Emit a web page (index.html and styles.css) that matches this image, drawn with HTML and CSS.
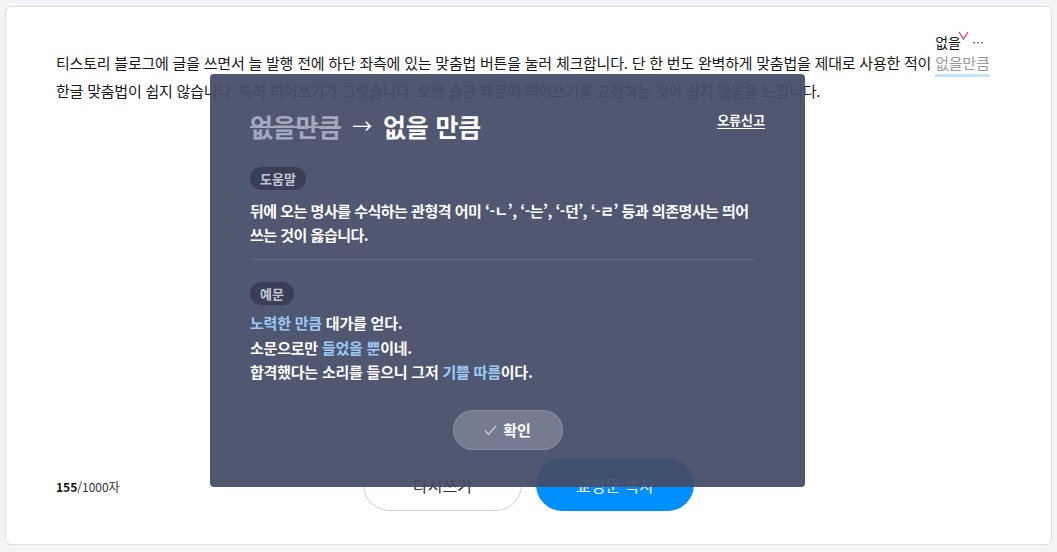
FILE: index.html
```html
<!DOCTYPE html>
<html lang="ko">
<head>
<meta charset="utf-8">
<title>맞춤법 검사</title>
<link rel="stylesheet" href="styles.css">
</head>
<body>
<div class="card">
  <p class="text">티스토리 블로그에 글을 쓰면서 늘 발행 전에 하단 좌측에 있는 맞춤법 버튼을 눌러 체크합니다. 단 한 번도 완벽하게 맞춤법을 제대로 사용한 적이 <span class="err">없을만큼<span class="tip">없을<svg class="tip-mark" width="11" height="9" viewBox="0 0 11 9"><path d="M1 1 L5.5 8 L10 1" fill="none" stroke="#f0304a" stroke-width="1.2"/></svg><span class="tip-more">…</span></span></span> 한글 맞춤법이 쉽지 않습니다. 특히 띄어쓰기가 그렇습니다. 오랜 습관 때문에 띄어쓰기를 교정하는 것이 쉽지 않음을 느낍니다.</p>

  <div class="footer">
    <div class="count"><b>155</b>/1000자</div>
    <div class="actions">
      <button class="btn btn-line">다시쓰기</button>
      <button class="btn btn-blue">교정문 복사</button>
    </div>
    <div></div>
  </div>

  <div class="popup">
    <a class="report">오류신고</a>
    <h2 class="title"><s class="before">없을만큼</s><span class="arrow">→</span><span class="after">없을 만큼</span></h2>
    <div class="section">
      <span class="badge">도움말</span>
      <p class="help">뒤에 오는 명사를 수식하는 관형격 어미 ‘-ㄴ’, ‘-는’, ‘-던’, ‘-ㄹ’ 등과 의존명사는 띄어 쓰는 것이 옳습니다.</p>
    </div>
    <div class="divider"></div>
    <div class="section">
      <span class="badge badge-ex">예문</span>
      <p class="examples"><span class="hl">노력한 만큼</span> 대가를 얻다.<br>소문으로만 <span class="hl">들었을 뿐</span>이네.<br>합격했다는 소리를 들으니 그저 <span class="hl">기쁠 따름</span>이다.</p>
    </div>
    <div class="confirm-row">
      <button class="confirm"><svg class="check" width="13" height="11" viewBox="0 0 13 11"><path d="M1 5.5 L4.5 9.5 L12 1" fill="none" stroke="#e6e8ef" stroke-width="1.1"/></svg>확인</button>
    </div>
  </div>
</div>
</body>
</html>
```

FILE: styles.css
```css
* { box-sizing: border-box; }
html, body { margin: 0; padding: 0; }
body {
  background: #f3f4f6;
  font-family: "Noto Sans CJK KR", "Noto Sans", sans-serif;
  color: #1a1a1a;
  padding: 6px 5px 0 5px;
}
.card {
  position: relative;
  height: 539px;
  background: #fff;
  border: 1px solid #dcdcde;
  border-radius: 6px;
  padding: 42px 50px 33px 50px;
  display: flex;
  flex-direction: column;
}
.text {
  margin: 0;
  font-size: 15px;
  line-height: 28px;
  letter-spacing: -0.22px;
  color: #1a1a1a;
}
.err {
  position: relative;
  white-space: nowrap;
  color: #9a9a9a;
  border-bottom: 3px solid #c3e1f7;
  padding-bottom: 1px;
}
.tip {
  position: absolute;
  left: 0;
  top: -20px;
  font-size: 14px;
  line-height: 20px;
  letter-spacing: 0;
  color: #111;
  white-space: nowrap;
}
.tip-mark {
  position: absolute;
  left: 23px;
  top: -1px;
}
.tip-more {
  margin-left: 11px;
  font-size: 12px;
  color: #333;
}
.footer {
  margin-top: auto;
  display: grid;
  grid-template-columns: 1fr auto 1fr;
  align-items: center;
}
.count {
  font-size: 12px;
  color: #333;
  padding-top: 4px;
}
.count b { font-weight: 700; color: #111; }
.actions {
  display: flex;
  gap: 14px;
}
.btn {
  height: 53px;
  border-radius: 27px;
  font-family: inherit;
  font-size: 16px;
  padding: 0;
  cursor: pointer;
}
.btn-line {
  width: 159px;
  background: #fff;
  border: 1px solid #cfcfcf;
  color: #333;
}
.btn-blue {
  width: 158px;
  background: #008ffe;
  border: none;
  color: #fff;
}
.popup {
  position: absolute;
  left: 204px;
  top: 67px;
  width: 595px;
  height: 413px;
  background: rgba(68, 76, 104, 0.94);
  border-radius: 4px;
  padding: 35px 40px 0 40px;
  color: #fff;
}
.report {
  position: absolute;
  right: 40px;
  top: 36px;
  font-size: 13px;
  font-weight: 700;
  line-height: 20px;
  color: #fff;
  text-decoration: underline;
  text-underline-offset: 3px;
}
.title {
  margin: 0;
  font-size: 25px;
  line-height: 34px;
  font-weight: 700;
  letter-spacing: -0.2px;
  display: flex;
  align-items: center;
}
.before {
  color: #a3a8bd;
  text-decoration-thickness: 2px;
}
.arrow {
  font-size: 20px;
  font-weight: 400;
  margin: 0 11px;
}
.after { color: #fff; }
.section {
  padding-right: 10px;
}
.title + .section { margin-top: 22px; padding-right: 0; }
.badge {
  display: inline-block;
  height: 23px;
  line-height: 23px;
  padding: 0 10px;
  border-radius: 12px;
  background: #3a3f57;
  color: #c2c6d4;
  font-size: 13px;
  font-weight: 700;
}
.help {
  margin: 9px 0 0;
  font-size: 15px;
  line-height: 23.5px;
  font-weight: 700;
  letter-spacing: -0.5px;
  word-break: keep-all;
  color: #fff;
}
.divider {
  margin: 13px 10px 20px 0;
  height: 1px;
  background: #636a86;
}
.examples {
  margin: 6px 0 0;
  font-size: 15px;
  line-height: 24.5px;
  font-weight: 700;
  letter-spacing: -0.22px;
  color: #fff;
}
.hl { color: #9ccaf6; }
.confirm-row {
  display: flex;
  justify-content: center;
  margin-top: 25px;
}
.confirm {
  width: 110px;
  height: 40px;
  border-radius: 20px;
  background: rgba(255, 255, 255, 0.22);
  border: 1px solid rgba(255, 255, 255, 0.15);
  color: #fff;
  font-family: inherit;
  font-size: 15px;
  font-weight: 700;
  display: flex;
  align-items: center;
  justify-content: center;
  gap: 6px;
  padding: 0;
}
.check { margin-top: 1px; }
```
